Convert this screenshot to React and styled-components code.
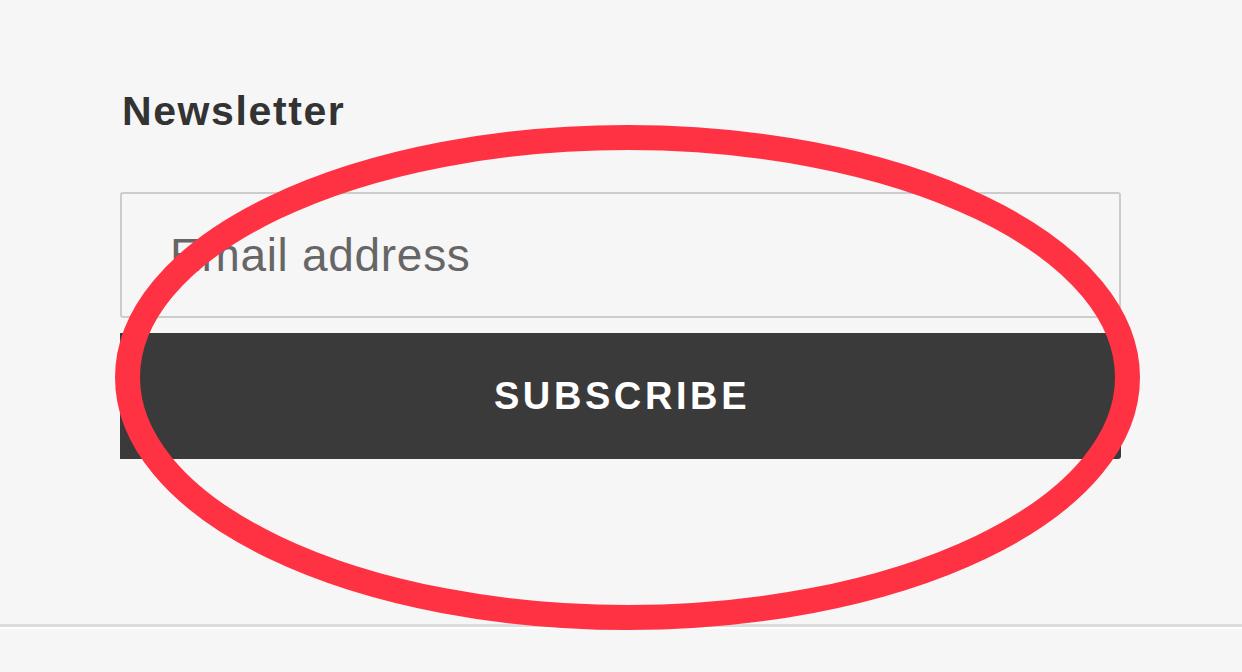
import React from 'react'
import styled, { createGlobalStyle } from 'styled-components'

const GlobalStyle = createGlobalStyle`
html, body {
  margin: 0;
  padding: 0;
  background: #f6f6f6;
  font-family: "Liberation Sans", Arial, sans-serif;
}
`

// page frame
const Page = styled.div`
position: relative;
width: 1242px;
height: 672px;
overflow: hidden;
background: #f6f6f6;
`

// newsletter block
const Section = styled.section`
padding: 88px 121px 0 120px;
height: 536px;
box-sizing: border-box;
`

const Title = styled.h3`
margin: 0 0 58px 2px;
font-size: 41px;
line-height: 46px;
font-weight: bold;
letter-spacing: 1.6px;
color: #333333;
`

const EmailInput = styled.input`
display: block;
width: 100%;
height: 126px;
box-sizing: border-box;
border: 2px solid #cccccc;
border-radius: 3px;
background: #f6f6f6;
padding: 0 48px;
font-family: "Liberation Sans", Arial, sans-serif;
font-size: 46px;
letter-spacing: 0.7px;
color: #333;
outline: none;
&::placeholder {
  color: #666666;
}
`

const SubscribeButton = styled.button`
display: block;
width: 100%;
height: 126px;
margin-top: 15px;
border: none;
border-radius: 0 0 3px 0;
background: #3a3a3a;
color: #ffffff;
font-family: "Liberation Sans", Arial, sans-serif;
font-size: 38px;
font-weight: bold;
letter-spacing: 3.6px;
text-indent: 3px;
cursor: pointer;
`

// footer divider
const Divider = styled.hr`
margin: 88px 0 0;
border: none;
border-top: 3px solid #dcdcdc;
border-bottom: 2px solid #ffffff;
`

// red marker circle on top
const Marker = styled.svg`
position: absolute;
left: 0;
top: 0;
pointer-events: none;
`

function App() {
  return (
    <Page>
      <GlobalStyle />
      <Section>
        <Title>Newsletter</Title>
        <EmailInput type="email" placeholder="Email address" />
        <SubscribeButton>SUBSCRIBE</SubscribeButton>
      </Section>
      <Divider />
      <Marker width="1242" height="672" viewBox="0 0 1242 672">
        <ellipse cx="627.5" cy="377.5" rx="500" ry="240" fill="none" stroke="#ff3244" strokeWidth="25" />
      </Marker>
    </Page>
  )
}

export default App
